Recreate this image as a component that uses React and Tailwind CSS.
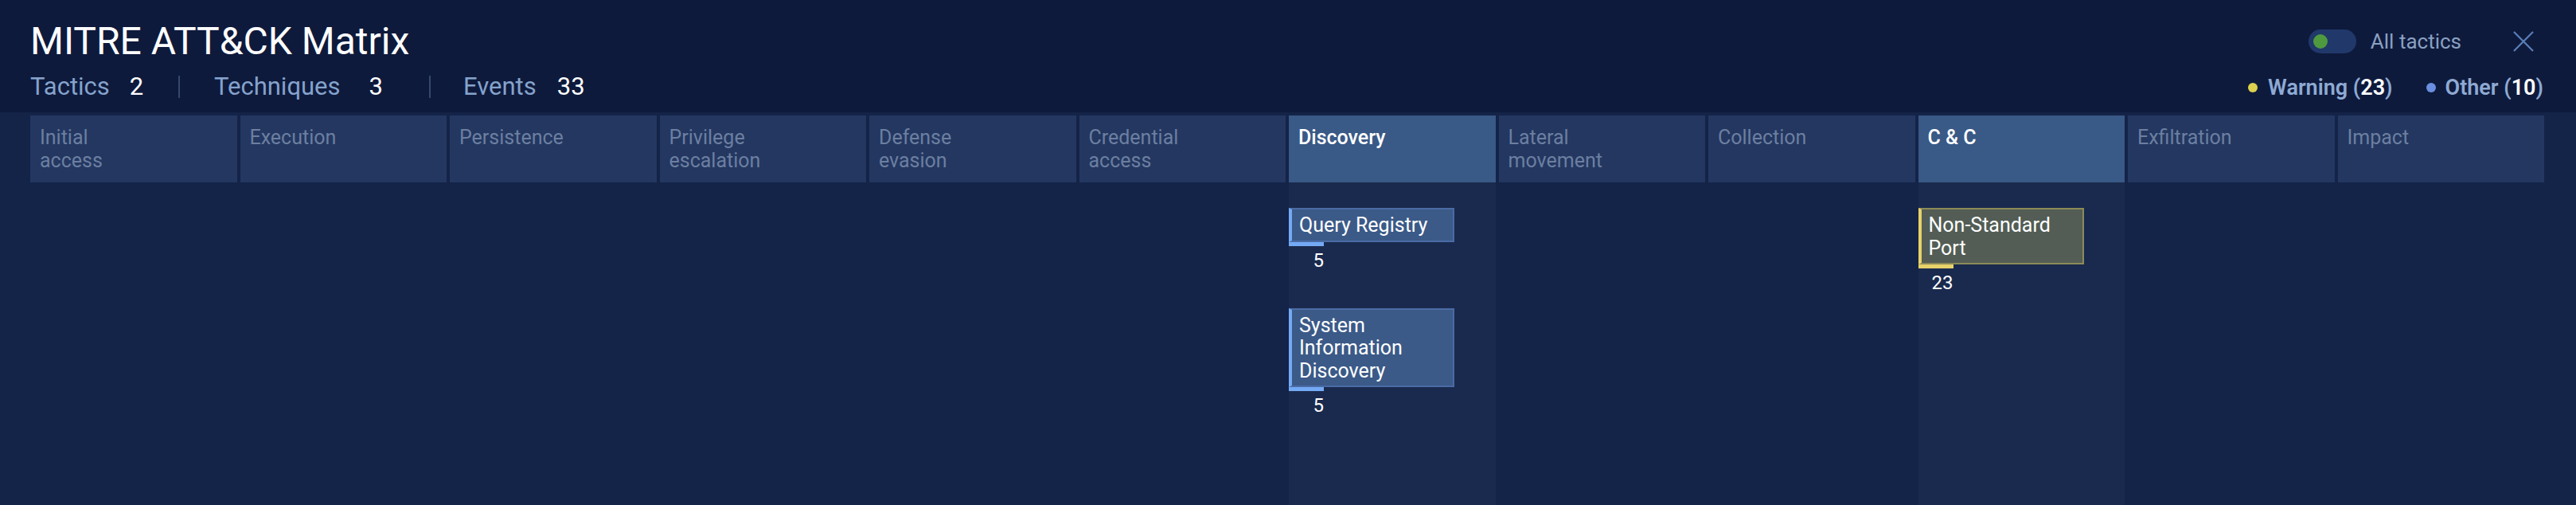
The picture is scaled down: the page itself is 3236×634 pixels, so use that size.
import React from 'react';

const tactics = [
    { name: ['Initial', 'access'] },
    { name: ['Execution'] },
    { name: ['Persistence'] },
    { name: ['Privilege', 'escalation'] },
    { name: ['Defense', 'evasion'] },
    { name: ['Credential', 'access'] },
    {
        name: ['Discovery'],
        active: true,
        techniques: [
            { name: 'Query Registry', count: 5, kind: 'other' },
            { name: 'System Information Discovery', count: 5, kind: 'other' },
        ],
    },
    { name: ['Lateral', 'movement'] },
    { name: ['Collection'] },
    {
        name: ['C & C'],
        active: true,
        techniques: [{ name: 'Non-Standard Port', count: 23, kind: 'warning' }],
    },
    { name: ['Exfiltration'] },
    { name: ['Impact'] },
];

function TechniqueCard({ technique }) {
    const warning = technique.kind === 'warning';
    return (
        <div className="flex flex-col">
            <div
                className={
                    warning
                        ? 'w-[208px] border-2 border-l-4 border-[#8c8a58] border-l-[#e6d26a] bg-[#535d55] pl-[9px] pr-2 pt-[6px] pb-[4px] text-[25px] leading-[28.5px] text-white'
                        : 'w-[208px] border-2 border-l-4 border-[#4a6ba5] border-l-[#74aaf5] bg-[#3b5a88] pl-[9px] pr-2 pt-[6px] pb-[4px] text-[25px] leading-[28.5px] text-white'
                }
            >
                {technique.name}
            </div>
            <div className={warning ? 'w-[44px] h-[5px] bg-[#e6d26a]' : 'w-[44px] h-[5px] bg-[#74aaf5]'} />
            <div className="w-[44px] mt-1 text-right text-[24px] leading-[28px] text-white">{technique.count}</div>
        </div>
    );
}

function TacticColumn({ tactic }) {
    return (
        <div className="flex flex-col">
            <div
                className={
                    tactic.active
                        ? 'h-[84px] bg-[#395986] pl-3 pt-[13px] text-[25px] leading-[29px] font-medium text-white'
                        : 'h-[84px] bg-[#233761] pl-3 pt-[13px] text-[25px] leading-[29px] text-[#6c7fa0]'
                }
            >
                {tactic.name.map((line) => (
                    <div key={line}>{line}</div>
                ))}
            </div>
            <div className={tactic.active ? 'flex-1 bg-[#1a2a4e] pt-8 flex flex-col gap-[46px]' : 'flex-1'}>
                {(tactic.techniques || []).map((t) => (
                    <TechniqueCard key={t.name} technique={t} />
                ))}
            </div>
        </div>
    );
}

export default function App() {
    return (
        <div className="w-[3236px] h-[634px] flex flex-col bg-[#142348] font-['Roboto',sans-serif]">
            {/* top bar */}
            <div className="h-[141px] shrink-0 bg-[#0e1a3c] pl-[38px] pr-[41px] flex justify-between">
                <div className="pt-[28px] flex flex-col">
                    <h1 className="text-[48px] leading-[48px] text-white">MITRE ATT&amp;CK Matrix</h1>
                    <div className="mt-[15px] h-[36px] flex items-center text-[31px] leading-[36px]">
                        <div className="w-[186px] flex">
                            <span className="text-[#85a3cc]">Tactics</span>
                            <span className="ml-[25px] text-white">2</span>
                        </div>
                        <div className="w-[2px] h-[28px] bg-[#34486d]" />
                        <div className="ml-[43px] w-[270px] flex">
                            <span className="text-[#85a3cc]">Techniques</span>
                            <span className="ml-[36px] text-white">3</span>
                        </div>
                        <div className="w-[2px] h-[28px] bg-[#34486d]" />
                        <div className="ml-[41px] flex">
                            <span className="text-[#85a3cc]">Events</span>
                            <span className="ml-[26px] text-white">33</span>
                        </div>
                    </div>
                </div>
                <div className="pt-[37px] flex flex-col items-end">
                    <div className="h-[30px] flex items-center">
                        <div className="w-[60px] h-[30px] rounded-full bg-[#21386a] flex items-center pl-[6px]">
                            <div className="w-[18px] h-[18px] rounded-full bg-[#4f9a3f]" />
                        </div>
                        <span className="ml-[18px] text-[26px] leading-[30px] text-[#8aa0c2]">All tactics</span>
                        <svg className="ml-[65px] mr-[12px]" width="26" height="26" viewBox="0 0 26 26">
                            <path d="M1 1 L25 25 M25 1 L1 25" stroke="#5a7fba" strokeWidth="2.2" fill="none" />
                        </svg>
                    </div>
                    <div className="mt-[28px] h-[30px] flex items-center text-[27px] leading-[30px] font-semibold">
                        <div className="w-[12px] h-[12px] rounded-full bg-[#dcd24e]" />
                        <span className="ml-[13px] text-[#8eaad3]">
                            Warning (<span className="text-white">23</span>)
                        </span>
                        <div className="ml-[42px] w-[12px] h-[12px] rounded-full bg-[#6a8fe0]" />
                        <span className="ml-[12px] text-[#8eaad3]">
                            Other (<span className="text-white">10</span>)
                        </span>
                    </div>
                </div>
            </div>

            {/* matrix */}
            <div className="flex-1 pt-1 pl-[38px] pr-[40px] grid grid-cols-12 gap-x-1">
                {tactics.map((tactic) => (
                    <TacticColumn key={tactic.name.join(' ')} tactic={tactic} />
                ))}
            </div>
        </div>
    );
}
